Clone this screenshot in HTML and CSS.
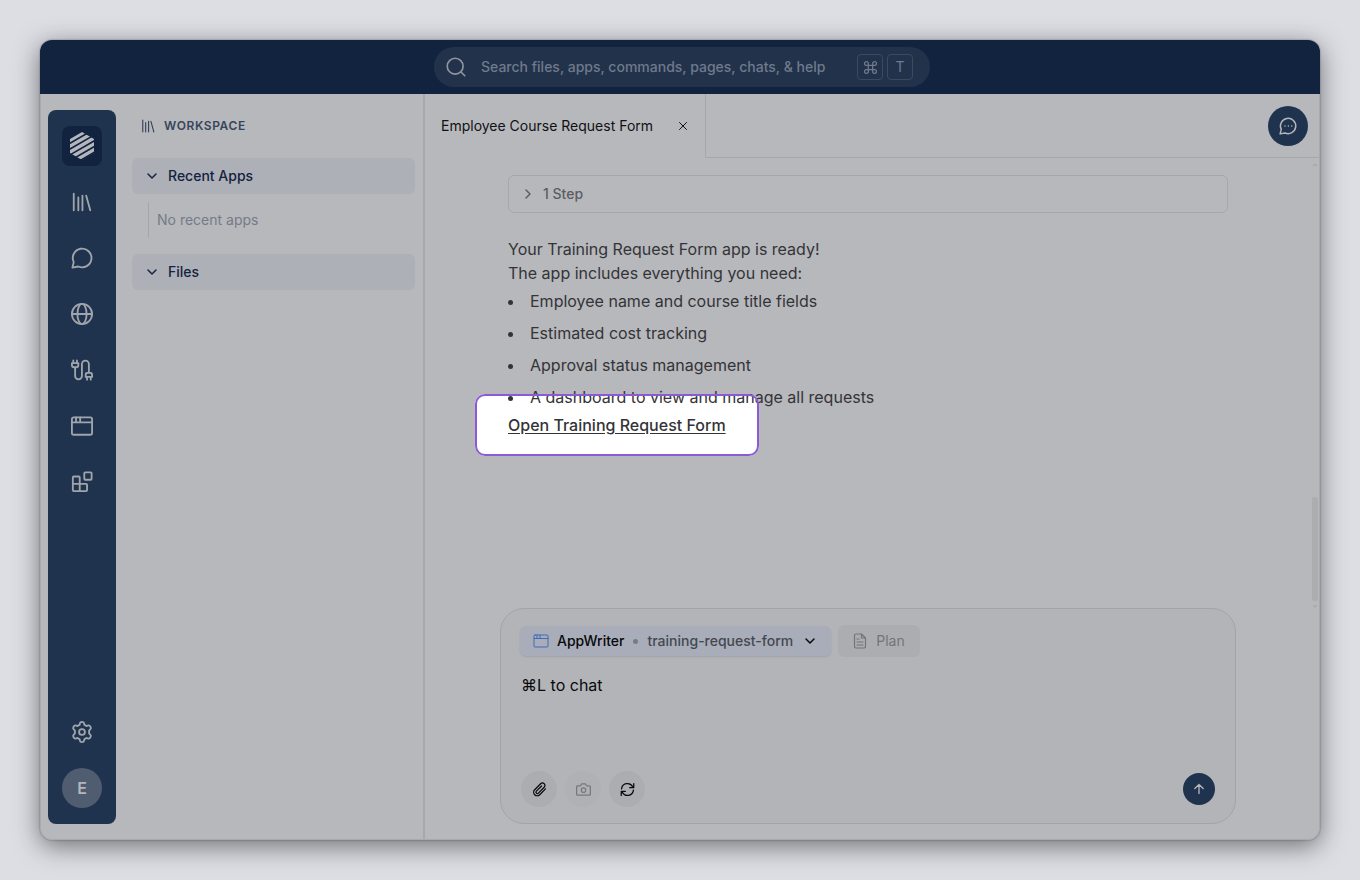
FILE: index.html
```
<!DOCTYPE html>
<html lang="en">
<head>
  <meta charset="UTF-8">
  <title>Workspace</title>
  <meta name="viewport" content="width=device-width, initial-scale=1">
  <link rel="stylesheet" href="styles.css">
</head>
<body>
  <div class="window">
    <header class="topbar">
      <label class="search">
        <svg class="icon-search" viewBox="0 0 24 24"><circle cx="11" cy="11" r="9.5"/><path d="M18 18l4.500 4.500"/></svg>
        <input type="text" aria-label="Search" placeholder="Search files, apps, commands, pages, chats, &amp; help">
        <kbd><svg viewBox="0 0 24 24"><path d="M8.500 8.500h7v7h-7zM8.500 8.500H5.500a3 3 0 1 1 3-3zM15.500 8.500V5.500a3 3 0 1 1 3 3zM15.500 15.500h3a3 3 0 1 1-3 3zM8.500 15.500v3a3 3 0 1 1-3-3z"/></svg></kbd>
        <kbd>T</kbd>
      </label>
    </header>

    <div class="body">
      <nav class="rail">
        <button class="logo" aria-label="Home">
          <svg viewBox="0 0 24 28">
            <clipPath id="hex"><path d="M12 0l12 7v14l-12 7L0 21V7z"/></clipPath>
            <g clip-path="url(#hex)"><path d="M-2 9.500L26-6.700M-2 15.300L26-.9M-2 21.100L26 4.900M-2 26.900L26 10.700M-2 32.700L26 16.500M-2 38.500L26 22.300"/></g>
          </svg>
        </button>
        <button class="rail-item" aria-label="Library"><svg viewBox="0 0 24 24"><path d="M3 3v18M8 7v14M12.500 5v16M16.500 5l4.500 16"/></svg></button>
        <button class="rail-item" aria-label="Chats"><svg viewBox="0 0 24 24"><path d="M1.500 22.500l1.500-6A10.200 10.200 0 1 1 8 21.300z"/></svg></button>
        <button class="rail-item" aria-label="Web"><svg viewBox="0 0 24 24"><circle cx="12" cy="12" r="11"/><ellipse cx="12" cy="12" rx="5" ry="11"/><path d="M1 12h22"/></svg></button>
        <button class="rail-item" aria-label="Connections"><svg viewBox="0 0 24 24"><path d="M2.500 1.500v3M6.500 1.500v3M1 4.500h7v2a2.500 2.500 0 0 1-2.500 2.500h-2A2.500 2.500 0 0 1 1 6.500zM4.500 9v9.500a3.700 3.700 0 0 0 7.400 0v-13a3.700 3.700 0 0 1 7.600 0V15M17.500 22.500v-3M21.500 22.500v-3M16 19.500h7v-2a2.500 2.500 0 0 0-2.500-2.500h-2a2.500 2.500 0 0 0-2.500 2.500z"/></svg></button>
        <button class="rail-item" aria-label="Apps"><svg viewBox="0 0 24 24"><rect x="1" y="2.500" width="22" height="19" rx="2"/><path d="M1 8h22M5.500 2.500V8M10 2.500V8"/></svg></button>
        <button class="rail-item" aria-label="Extensions"><svg viewBox="0 0 24 24"><rect x="14.500" y="1.500" width="8" height="8" rx="1"/><path d="M3 6h5.500a1 1 0 0 1 1 1v15H3a1 1 0 0 1-1-1V7a1 1 0 0 1 1-1zM2 14h14.500a1 1 0 0 1 1 1v6a1 1 0 0 1-1 1h-8"/></svg></button>
        <button class="rail-item settings" aria-label="Settings"><svg viewBox="0 0 24 24"><circle cx="12" cy="12" r="3.200"/><path d="M9.800 2.300Q10 1 12 1t2.200 1.300l.5 2q1.200.5 2.200 1.200l2-.6q1.300-.4 2.300 1.300t0 2.700l-1.500 1.500q.2 1.600 0 3.200l1.500 1.500q1 1 0 2.700t-2.300 1.300l-2-.6q-1 .8-2.200 1.200l-.5 2Q14 23 12 23t-2.200-1.300l-.5-2q-1.200-.4-2.200-1.200l-2 .6q-1.300.4-2.300-1.300t0-2.700l1.500-1.500q-.2-1.600 0-3.200L2.800 8.900q-1-1 0-2.700t2.300-1.300l2 .6q1-.7 2.200-1.200z"/></svg></button>
        <button class="avatar">E</button>
      </nav>

      <aside class="panel">
        <h2><svg viewBox="0 0 24 24"><path d="M3 2v20M8 6v16M13 4v18M17 4l5 18"/></svg>WORKSPACE</h2>
        <button class="group"><svg class="chevron" viewBox="0 0 10 10"><path d="M1 3l4 4 4-4"/></svg>Recent Apps</button>
        <p class="empty">No recent apps</p>
        <button class="group"><svg class="chevron" viewBox="0 0 10 10"><path d="M1 3l4 4 4-4"/></svg>Files</button>
      </aside>

      <main class="main">
        <div class="tabs">
          <div class="tab">
            <span>Employee Course Request Form</span>
            <button class="close" aria-label="Close tab"><svg viewBox="0 0 8 8"><path d="M.5.500l7 7M7.500.500l-7 7"/></svg></button>
          </div>
          <div class="tab-space">
            <button class="assistant" aria-label="Open chat"><svg viewBox="0 0 24 24"><path d="M1.500 22.500l1.500-6A10.200 10.200 0 1 1 8 21.300z"/><path d="M8 12h.01M12.500 12h.01M17 12h.01"/></svg></button>
          </div>
        </div>

        <div class="thread">
          <div class="messages">
            <button class="steps"><svg class="chevron" viewBox="0 0 10 10"><path d="M3 1l4 4-4 4"/></svg>1 Step</button>
            <div class="message">
              <p>Your Training Request Form app is ready!</p>
              <p>The app includes everything you need:</p>
              <ul>
                <li>Employee name and course title fields</li>
                <li>Estimated cost tracking</li>
                <li>Approval status management</li>
                <li>A dashboard to view and manage all requests</li>
              </ul>
              <a class="spotlight" href="#">Open Training Request Form</a>
            </div>
          </div>
          <div class="scrollbar"><i class="arrow up"></i><i class="thumb"></i><i class="arrow down"></i></div>
        </div>

        <form class="composer">
          <div class="context">
            <button type="button" class="mode">
              <svg class="icon-app" viewBox="0 0 16 14"><rect x="1" y="1" width="14" height="12" rx="1"/><path d="M1 4.500h14M4 1v3M7 1v3"/></svg>
              <strong>AppWriter</strong><i class="dot"></i><span>training-request-form</span>
              <svg class="chevron" viewBox="0 0 10 10"><path d="M1 3l4 4 4-4"/></svg>
            </button>
            <button type="button" class="plan"><svg viewBox="0 0 14 16"><path d="M8.500 1H3a1.500 1.500 0 0 0-1.500 1.500v11A1.500 1.500 0 0 0 3 15h8a1.500 1.500 0 0 0 1.500-1.500V5zM8.500 1v4h4M4 6h2M4 9h6M4 12h6"/></svg>Plan</button>
          </div>
          <textarea aria-label="Message" placeholder="⌘L to chat"></textarea>
          <div class="tools">
            <button type="button" class="tool" aria-label="Attach file"><svg viewBox="0 0 24 24"><path d="M21.500 11l-9.200 9.300a5.600 5.600 0 0 1-8-8l9.500-9.500a4 4 0 0 1 5.700 5.700L10.200 17.800a2.200 2.200 0 0 1-3.200-3.200l8.300-8.300"/></svg></button>
            <button type="button" class="tool faded" aria-label="Take screenshot"><svg viewBox="0 0 24 24"><path d="M2.500 6H7l2-3h6l2 3h4.500A1.500 1.500 0 0 1 23 7.500v12a1.500 1.500 0 0 1-1.500 1.500h-19A1.500 1.500 0 0 1 1 19.500v-12A1.500 1.500 0 0 1 2.500 6z"/><circle cx="12" cy="13" r="3.500"/></svg></button>
            <button type="button" class="tool" aria-label="Restart"><svg viewBox="0 0 24 24"><path d="M2.500 11A9.500 9.500 0 0 1 20 7l2 2M22 2.500V9h-6.500M21.500 13A9.500 9.500 0 0 1 4 17l-2-2M2 21.500V15h6.500"/></svg></button>
            <button class="send" aria-label="Send"><svg viewBox="0 0 12 12"><path d="M6 11.500V.500M1 5.500l5-5 5 5"/></svg></button>
          </div>
        </form>
      </main>
    </div>
  </div>
</body>
</html>
```
FILE: styles.css
```
* { box-sizing: border-box; }
body {
  margin: 0;
  padding: 40px;
  min-height: 100vh;
  display: flex;
  background: #dddee4;
  color: #333437;
  font-family: Inter, "Liberation Sans", sans-serif;
  font-size: 14px;
  line-height: 20px;
}
p, h2, ul { margin: 0; padding: 0; }
button, input, textarea { font: inherit; color: inherit; border: 0; padding: 0; background: none; }
svg {
  display: block;
  flex: none;
  fill: none;
  stroke: currentColor;
  stroke-width: 2;
  stroke-linecap: round;
  stroke-linejoin: round;
  overflow: visible;
}
.chevron { width: 10px; height: 10px; stroke-width: 1.5; }

.window {
  flex: 1;
  display: flex;
  flex-direction: column;
  border-radius: 12px;
  overflow: hidden;
  background: #b7b8bc;
  box-shadow: 0 0 2px rgba(0,0,0,0.4), 0 6px 26px rgba(0,0,0,0.5);
}

.topbar {
  height: 54px;
  display: flex;
  align-items: center;
  justify-content: center;
  background: #12233f;
}
.search {
  display: flex;
  align-items: center;
  gap: 4px;
  width: 496px;
  height: 40px;
  margin-left: 4px;
  padding: 0 17px 0 12px;
  border-radius: 20px;
  background: #22324b;
  color: #6f7a8b;
}
.icon-search { width: 20px; height: 20px; margin-right: 11px; color: #8f969f; }
.search input { flex: 1; min-width: 0; font-weight: 500; outline: none; }
.search input::placeholder { color: #6f7a8b; opacity: 1; }
kbd {
  display: flex;
  align-items: center;
  justify-content: center;
  width: 26px;
  height: 26px;
  border: 1px solid #3c4a61;
  border-radius: 4px;
  font: inherit;
}
kbd svg { width: 15px; height: 15px; }

.body {
  flex: 1;
  display: flex;
  border: 1px solid #a8aaae;
  border-top: 0;
  border-radius: 0 0 12px 12px;
}

.rail {
  display: flex;
  flex-direction: column;
  align-items: center;
  gap: 16px;
  width: 68px;
  margin: 16px 16px 15px 7px;
  padding: 16px 0;
  border-radius: 8px;
  background: #20334e;
  color: #a0a5ab;
}
.logo, .rail-item, .avatar {
  display: flex;
  align-items: center;
  justify-content: center;
  width: 40px;
  height: 40px;
}
.logo { border-radius: 8px; background: #12233f; color: #b3b6bb; }
.logo svg { width: 24px; height: 28px; stroke-width: 3.4; stroke-linecap: butt; }
.rail-item svg { width: 22px; height: 22px; stroke-width: 2; }
.settings { margin-top: auto; }
.avatar { border-radius: 50%; background: #505d70; color: #b3b6bb; font-size: 16px; font-weight: 600; }

.panel {
  width: 293px;
  padding-right: 8px;
  border-right: 2px solid #a7a9ad;
}
.panel h2 {
  display: flex;
  align-items: center;
  gap: 9px;
  height: 64px;
  padding-left: 9px;
  color: #37455b;
  font-size: 12px;
  font-weight: 600;
  letter-spacing: 0.6px;
}
.panel h2 svg { width: 14px; height: 14px; stroke-width: 2; }
.group {
  display: flex;
  align-items: center;
  gap: 11px;
  width: 100%;
  height: 36px;
  padding-left: 15px;
  border-radius: 6px;
  background: #adb0b7;
  color: #14233e;
  font-weight: 500;
}
.empty {
  margin: 8px 16px 16px;
  padding: 8px;
  border-left: 1px solid #a3a6ac;
  color: #747b88;
}

.main { flex: 1; min-width: 0; display: flex; flex-direction: column; }
.tabs { display: flex; height: 64px; }
.tab { display: flex; align-items: center; gap: 21px; width: 280px; padding-left: 16px; color: #101114; }
.close { width: 18px; height: 20px; display: flex; align-items: center; justify-content: center; }
.close svg { width: 8px; height: 8px; stroke-width: 1; }
.tab-space {
  flex: 1;
  display: flex;
  align-items: center;
  justify-content: flex-end;
  padding-right: 11px;
  border-left: 1px solid #a5a7ab;
  border-bottom: 1px solid #a5a7ab;
}
.assistant, .send {
  display: flex;
  align-items: center;
  justify-content: center;
  width: 40px;
  height: 40px;
  border-radius: 50%;
  background: #20334e;
  color: #b3b6bb;
}
.assistant svg { width: 18px; height: 18px; }

.thread { flex: 1; display: flex; isolation: isolate; }
.messages { flex: 1; max-width: 752px; margin: 0 auto; padding: 17px 16px; }
.steps {
  display: flex;
  align-items: center;
  gap: 10px;
  width: 100%;
  height: 38px;
  padding-left: 14px;
  border: 1px solid #a5a7ab;
  border-radius: 6px;
  color: #5c5e62;
  font-weight: 500;
}
.message { margin-top: 24px; font-size: 16px; line-height: 24px; }
.message ul { list-style: none; }
.message li { position: relative; margin: 4px 0 8px; padding-left: 22px; }
.message li:last-child { margin-bottom: 4px; }
.message li::before {
  content: "";
  position: absolute;
  left: 0;
  top: 11px;
  width: 5px;
  height: 5px;
  border-radius: 50%;
  background: #333437;
}
.spotlight {
  position: relative;
  display: inline-block;
  color: #333437;
  font-weight: 500;
  text-underline-offset: 2px;
}
.spotlight::before, .spotlight::after {
  content: "";
  position: absolute;
  inset: -19px -33px;
  border-radius: 10px;
}
.spotlight::before { z-index: -1; background: #fff; }
.spotlight::after { border: 2px solid #8b5bd6; }

.scrollbar { display: flex; flex-direction: column; align-items: center; width: 8px; }
.arrow { border: 3px solid transparent; }
.up { margin-top: 2px; margin-bottom: auto; border-bottom-color: #aaacb0; }
.down { margin-top: 4px; border-top-color: #aaacb0; border-bottom: 0; }
.thumb { width: 6px; height: 104px; border-radius: 2px; background: #abadb1; }

.composer {
  align-self: center;
  display: flex;
  flex-direction: column;
  width: calc(100% - 40px);
  max-width: 736px;
  height: 216px;
  margin: 0 8px 15px 0;
  padding: 16px 19px;
  border: 1px solid #a2a4a8;
  border-radius: 24px;
  background: #b3b4b8;
}
.context { display: flex; align-items: center; gap: 7px; height: 32px; }
.mode, .plan { display: flex; align-items: center; border-radius: 6px; }
.mode {
  gap: 8px;
  height: 30px;
  padding: 0 16px 0 13px;
  background: #a8adb9;
  box-shadow: 0 1px 2px rgba(0,0,0,0.1);
  color: #44484f;
  font-weight: 500;
}
.mode strong { color: #08090c; font-weight: 500; }
.mode .chevron { margin-left: 4px; color: #08090c; }
.icon-app { width: 16px; height: 14px; stroke-width: 1; color: #3e6cb5; }
.dot { width: 5px; height: 5px; margin: 0 1px; border-radius: 50%; background: #777b83; }
.plan { gap: 9px; height: 32px; padding: 0 15px; background: #acadb0; color: #727478; }
.plan svg { width: 14px; height: 16px; stroke-width: 1.2; }
.composer textarea {
  flex: 1;
  padding: 16px 1px;
  outline: none;
  resize: none;
  color: #08090c;
  font-size: 16px;
  line-height: 24px;
}
.composer textarea::placeholder { color: #08090c; opacity: 1; }
.tools { display: flex; align-items: center; gap: 8px; padding: 0 1px; }
.tool {
  display: flex;
  align-items: center;
  justify-content: center;
  width: 36px;
  height: 36px;
  border-radius: 50%;
  background: #acadb0;
  color: #08090c;
}
.tool svg { width: 15px; height: 15px; }
.faded { background: #b0b1b4; color: #77797d; }
.send { width: 32px; height: 32px; margin-left: auto; }
.send svg { width: 10px; height: 10px; stroke-width: 1.6; }
```
